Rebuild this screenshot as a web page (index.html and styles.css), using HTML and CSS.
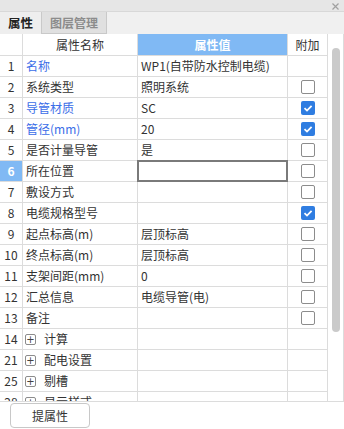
FILE: index.html
```html
<!DOCTYPE html>
<html lang="zh">
<head>
<meta charset="utf-8">
<link rel="stylesheet" href="styles.css">
</head>
<body>
<div class="panel">
  <div class="titlebar">
    <svg class="close" width="7" height="7" viewBox="0 0 7 7"><path d="M0.5 0.5L6.5 6.5M6.5 0.5L0.5 6.5" stroke="#a0a0a0" stroke-width="1.2"/></svg>
  </div>
  <div class="tabs">
    <div class="tab active">属性</div>
    <div class="tab">图层管理</div>
  </div>
  <div class="gridwrap">
    <div class="grid">
      <div class="row head">
        <div class="c num"></div>
        <div class="c name center">属性名称</div>
        <div class="c val center hval">属性值</div>
        <div class="c add center">附加</div>
      </div>
      <div class="row"><div class="c num">1</div><div class="c name blue">名称</div><div class="c val">WP1(自带防水控制电缆)</div><div class="c add"></div></div>
      <div class="row"><div class="c num">2</div><div class="c name">系统类型</div><div class="c val">照明系统</div><div class="c add"><span class="cb"></span></div></div>
      <div class="row"><div class="c num">3</div><div class="c name blue">导管材质</div><div class="c val">SC</div><div class="c add"><span class="cb on"><svg viewBox="0 0 14 14" width="14" height="14"><path d="M3.5 7.2L6 9.6L10.6 4.8" fill="none" stroke="#fff" stroke-width="1.8"/></svg></span></div></div>
      <div class="row"><div class="c num">4</div><div class="c name blue">管径(mm)</div><div class="c val">20</div><div class="c add"><span class="cb on"><svg viewBox="0 0 14 14" width="14" height="14"><path d="M3.5 7.2L6 9.6L10.6 4.8" fill="none" stroke="#fff" stroke-width="1.8"/></svg></span></div></div>
      <div class="row"><div class="c num">5</div><div class="c name">是否计量导管</div><div class="c val">是</div><div class="c add"><span class="cb"></span></div></div>
      <div class="row"><div class="c num sel">6</div><div class="c name">所在位置</div><div class="c val editing"></div><div class="c add"><span class="cb"></span></div></div>
      <div class="row"><div class="c num">7</div><div class="c name">敷设方式</div><div class="c val"></div><div class="c add"><span class="cb"></span></div></div>
      <div class="row"><div class="c num">8</div><div class="c name">电缆规格型号</div><div class="c val"></div><div class="c add"><span class="cb on"><svg viewBox="0 0 14 14" width="14" height="14"><path d="M3.5 7.2L6 9.6L10.6 4.8" fill="none" stroke="#fff" stroke-width="1.8"/></svg></span></div></div>
      <div class="row"><div class="c num">9</div><div class="c name">起点标高(m)</div><div class="c val">层顶标高</div><div class="c add"><span class="cb"></span></div></div>
      <div class="row"><div class="c num">10</div><div class="c name">终点标高(m)</div><div class="c val">层顶标高</div><div class="c add"><span class="cb"></span></div></div>
      <div class="row"><div class="c num">11</div><div class="c name">支架间距(mm)</div><div class="c val">0</div><div class="c add"><span class="cb"></span></div></div>
      <div class="row"><div class="c num">12</div><div class="c name">汇总信息</div><div class="c val">电缆导管(电)</div><div class="c add"><span class="cb"></span></div></div>
      <div class="row"><div class="c num">13</div><div class="c name">备注</div><div class="c val"></div><div class="c add"><span class="cb"></span></div></div>
      <div class="row"><div class="c num">14</div><div class="c name grp"><span class="plus">+</span>计算</div><div class="c val"></div><div class="c add"></div></div>
      <div class="row"><div class="c num">21</div><div class="c name grp"><span class="plus">+</span>配电设置</div><div class="c val"></div><div class="c add"></div></div>
      <div class="row"><div class="c num">25</div><div class="c name grp"><span class="plus">+</span>剔槽</div><div class="c val"></div><div class="c add"></div></div>
      <div class="row"><div class="c num">28</div><div class="c name grp"><span class="plus">+</span>显示样式</div><div class="c val"></div><div class="c add"></div></div>
    </div>
    <div class="scroll"><div class="thumb"></div></div>
  </div>
  <div class="footer">
    <button class="btn">提属性</button>
  </div>
</div>
</body>
</html>
```
FILE: styles.css
```css
* { box-sizing: content-box; }
html, body { margin: 0; padding: 0; background: #fff; }
body {
  width: 344px;
  height: 429px;
  overflow: hidden;
  font-family: "Noto Sans CJK SC", "Noto Sans", sans-serif;
  font-size: 12px;
  color: #333;
}
.panel { width: 344px; height: 429px; display: flex; flex-direction: column; }
.titlebar {
  height: 11px;
  background: #e6e6e6;
  border-bottom: 1px solid #d8d8d8;
  display: flex;
  justify-content: flex-end;
  align-items: flex-start;
}
.close { margin: 3px 5px 0 0; }
.tabs {
  height: 22px;
  background: #f0f0f0;
  display: flex;
}
.tab {
  height: 21px;
  line-height: 21px;
  font-weight: bold;
  font-size: 12px;
  padding: 0 8px;
  color: #8c8c8c;
  background: #e0e0e0;
  border: 1px solid #c9c9c9;
  border-top: none;
}
.tab.active {
  width: 25px;
  padding: 0 8px 0 8px;
  font-size: 12.5px;
  color: #222;
  background: #eeeeee;
  border: none;
  height: 22px;
  line-height: 22px;
}
.gridwrap {
  height: 367px;
  border-bottom: 1px solid #dcdcdc;
  display: flex;
  overflow: hidden;
}
.grid { width: 328px; display: flex; flex-direction: column; }
.row {
  display: flex;
  height: 20px;
  border-bottom: 1px solid #dcdcdc;
  flex: none;
}
.row.head { height: 21px; }
.c {
  border-right: 1px solid #dcdcdc;
  line-height: 20px;
  white-space: nowrap;
  overflow: hidden;
  flex: none;
}
.head .c { line-height: 21px; }
.num { width: 22px; text-align: center; }
.name { width: 111px; padding-left: 3px; }
.val { width: 146px; padding-left: 3px; }
.add { width: 39px; display: flex; align-items: center; justify-content: center; }
.center { text-align: center; padding-left: 0; }
.name.center { width: 114px; }
.val.center { width: 149px; }
.hval { background: #80b9f4; color: #fff; font-weight: bold; }
.blue { color: #3b6ee8; }
.num.sel { background: #80b9f4; color: #fff; font-weight: bold; }
.editing { position: relative; overflow: visible; }
.editing::after {
  content: "";
  position: absolute;
  left: -1px; top: -1px; right: -1px; bottom: -1px;
  border: 2px solid #7a7a7a;
}
.cb {
  width: 12px;
  height: 12px;
  border: 1px solid #8c8c8c;
  border-radius: 2px;
  background: #fff;
  display: block;
}
.cb.on {
  width: 14px; height: 14px;
  border: none;
  background: #2f7de1;
}
.cb svg { display: block; }
.grp { display: flex; align-items: center; padding-left: 2px; width: 112px; }
.plus {
  width: 9px;
  height: 9px;
  border: 1px solid #8c8c8c;
  border-radius: 2px;
  font-size: 10px;
  line-height: 9px;
  text-align: center;
  color: #444;
  margin-right: 8px;
  font-family: "DejaVu Sans", sans-serif;
}
.scroll {
  width: 15px;
  border-right: 1px solid #dcdcdc;
  position: relative;
  display: flex;
  justify-content: center;
  padding-top: 14px;
}
.thumb {
  width: 8px;
  height: 284px;
  background: #cacaca;
  border-radius: 4px;
}
.footer { height: 27px; padding-left: 10px; }
.btn {
  margin-top: 1px;
  width: 80px;
  height: 25px;
  border: 1px solid #c8c8c8;
  border-radius: 4px;
  background: #fff;
  font-family: "Noto Sans CJK SC", "Noto Sans", sans-serif;
  font-size: 12px;
  color: #333;
  padding: 0;
  box-sizing: border-box;
}
```
